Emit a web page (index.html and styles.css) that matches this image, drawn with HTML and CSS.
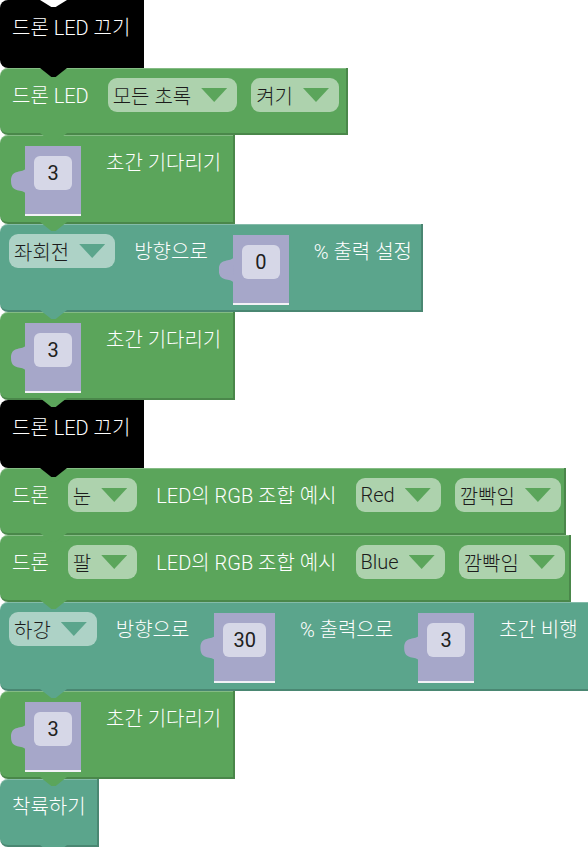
FILE: index.html
```html
<!DOCTYPE html>
<html lang="ko">
<head>
<meta charset="utf-8">
<title>Drone blocks</title>
<link rel="stylesheet" href="styles.css">
</head>
<body>
<div class="program">
  <div class="block black first h68 w144"><span class="lbl">드론 LED 끄기</span></div>
  <div class="block green h67 w348"><span class="lbl">드론 LED</span><span class="dd">모든 초록<i class="arr"></i></span><span class="dd">켜기<i class="arr"></i></span></div>
  <div class="block green h89 w235"><span class="val"><span class="num">3</span></span><span class="lbl">초간 기다리기</span></div>
  <div class="block teal h88 w423"><span class="dd">좌회전<i class="arr"></i></span><span class="lbl">방향으로</span><span class="val"><span class="num">0</span></span><span class="lbl">% 출력 설정</span></div>
  <div class="block green h88 w235"><span class="val"><span class="num">3</span></span><span class="lbl">초간 기다리기</span></div>
  <div class="block black h68 w144"><span class="lbl">드론 LED 끄기</span></div>
  <div class="block green h67 w566"><span class="lbl">드론</span><span class="dd">눈<i class="arr"></i></span><span class="lbl">LED의 RGB 조합 예시</span><span class="dd">Red<i class="arr"></i></span><span class="dd">깜빡임<i class="arr"></i></span></div>
  <div class="block green h67 w571"><span class="lbl">드론</span><span class="dd">팔<i class="arr"></i></span><span class="lbl">LED의 RGB 조합 예시</span><span class="dd">Blue<i class="arr"></i></span><span class="dd">깜빡임<i class="arr"></i></span></div>
  <div class="block teal h89 w600"><span class="dd">하강<i class="arr"></i></span><span class="lbl">방향으로</span><span class="val"><span class="num">30</span></span><span class="lbl">% 출력으로</span><span class="val"><span class="num">3</span></span><span class="lbl">초간 비행</span></div>
  <div class="block green h88 w235"><span class="val"><span class="num">3</span></span><span class="lbl">초간 기다리기</span></div>
  <div class="block teal h68 w99"><span class="lbl">착륙하기</span></div>
</div>
</body>
</html>
```

FILE: styles.css
```css
html, body {
  margin: 0;
  padding: 0;
  background: #ffffff;
  overflow: hidden;
}

body {
  font-family: Roboto, "Noto Sans CJK KR", sans-serif;
  font-size: 20px;
  font-weight: 300;
  color: #ffffff;
}

.program {
  display: flex;
  flex-direction: column;
  align-items: flex-start;
}

.block {
  --c: #5ba55b;
  position: relative;
  box-sizing: border-box;
  display: flex;
  align-items: flex-start;
  flex-shrink: 0;
  padding-left: 9px;
  background: var(--c);
  border-radius: 8px 0 0 8px;
  border-right: 2px solid rgba(0, 0, 0, 0.18);
  border-bottom: 2px solid rgba(0, 0, 0, 0.18);
  box-shadow: inset 0 1px 0 rgba(255, 255, 255, 0.25);
  white-space: nowrap;
}

.green { --c: #5ba55b; }
.teal { --c: #5ba58c; }
.black {
  --c: #000000;
  border-right: none;
  border-bottom: none;
  box-shadow: none;
}

/* next-statement tab */
.block::after {
  content: "";
  position: absolute;
  left: 40px;
  bottom: -9px;
  width: 27px;
  height: 9px;
  background: var(--c);
  clip-path: polygon(0 0, 100% 0, 58% 100%, 42% 100%);
  z-index: 2;
}

/* previous-statement notch on the top block */
.first::before {
  content: "";
  position: absolute;
  left: 40px;
  top: 0;
  width: 27px;
  height: 7px;
  background: #ffffff;
  clip-path: polygon(0 0, 100% 0, 58% 100%, 42% 100%);
}

.h67 { height: 67px; }
.h68 { height: 68px; }
.h88 { height: 88px; }
.h89 { height: 89px; }

.w99 { width: 99px; }
.w144 { width: 144px; }
.w235 { width: 235px; }
.w348 { width: 348px; }
.w423 { width: 423px; }
.w566 { width: 566px; }
.w571 { width: 571px; }
.w600 { width: 600px; }

.lbl {
  margin-top: 16px;
  line-height: 24px;
  color: #ffffff;
}

.dd {
  display: flex;
  align-items: center;
  box-sizing: border-box;
  height: 34px;
  margin-top: 10px;
  padding: 0 10px 0 5px;
  border-radius: 9px;
  background: rgba(255, 255, 255, 0.5);
  color: #1c1c1c;
}

.arr {
  display: block;
  width: 26px;
  height: 14px;
  margin-left: 10px;
  background: var(--c);
  clip-path: polygon(0 0, 100% 0, 50% 100%);
}

.val {
  position: relative;
  box-sizing: border-box;
  height: 70px;
  margin-top: 11px;
  padding: 10px 9px 0;
  background: #a6a7c9;
  border-bottom: 2px solid #f2f2f6;
}

.val::before {
  content: "";
  position: absolute;
  left: -14px;
  top: 22px;
  width: 15px;
  height: 26px;
  background: #a6a7c9;
  clip-path: path("M15 0 C12 6 0 0 0 13 C0 26 12 20 15 26 Z");
}

.num {
  display: block;
  box-sizing: border-box;
  min-width: 38px;
  height: 34px;
  padding: 0 10px;
  border-radius: 6px;
  background: #d6d7e7;
  color: #202020;
  font-weight: 400;
  line-height: 34px;
  text-align: center;
}

.lbl:first-child { margin-left: 3px; }
.val:first-child { margin-left: 16px; }
.lbl + .dd, .dd + .lbl { margin-left: 19px; }
.dd + .dd { margin-left: 14px; }
.lbl + .val, .val + .lbl { margin-left: 25px; }
```
